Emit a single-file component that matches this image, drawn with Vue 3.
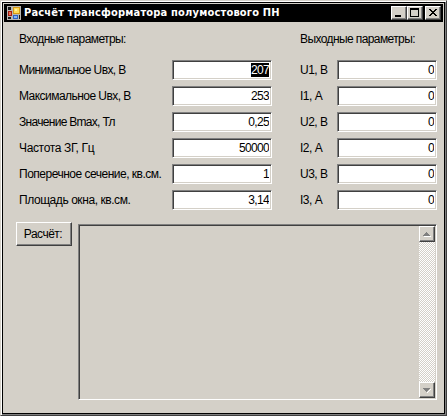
<template>
  <div class="window">
    <div class="titlebar">
      <svg class="app-icon" width="14" height="14" viewBox="0 0 14 14" shape-rendering="crispEdges">
        <rect width="14" height="14" fill="#b8b6b2" />
        <path fill="#181818" d="M1 1H4V4H1ZM1 11H4V13H1ZM12 9H13V13H12Z" />
        <rect x="1" y="5" width="4" height="5" fill="#a51d12" />
        <rect x="2" y="6" width="2" height="3" fill="#ee7050" />
        <rect x="6" y="1" width="7" height="7" fill="#d79a16" />
        <rect x="7" y="2" width="5" height="5" fill="#ffdc58" />
        <rect x="8" y="3" width="2" height="2" fill="#fff0a0" />
        <rect x="6" y="9" width="5" height="4" fill="#2f62c0" />
        <rect x="7" y="10" width="3" height="2" fill="#82b4fa" />
      </svg>
      <h1>Расчёт трансформатора полумостового ПН</h1>
      <div class="controls">
        <button class="ctl" aria-label="minimize">
          <svg width="12" height="10" shape-rendering="crispEdges"><path d="M2 7H8V9H2Z" /></svg>
        </button>
        <button class="ctl" aria-label="maximize">
          <svg width="12" height="10" shape-rendering="crispEdges">
            <path fill-rule="evenodd" d="M1 0H10V9H1ZM2 2V8H9V2Z" />
          </svg>
        </button>
        <button class="ctl close" aria-label="close">
          <svg width="12" height="10" shape-rendering="crispEdges">
            <path d="M2 1H4V2H5V3H7V2H8V1H10V2H9V3H8V4H7V5H8V6H9V7H10V8H8V7H7V6H5V7H4V8H2V7H3V6H4V5H5V4H4V3H3V2H2Z" />
          </svg>
        </button>
      </div>
    </div>

    <div class="form">
      <div class="group">
        <h2>Входные параметры:</h2>
        <label v-for="(item, i) in inputs" :key="item.label" class="row">
          <span :style="{ letterSpacing: item.spacing + 'px' }">{{ item.label }}</span>
          <input :ref="el => { if (i === 0) firstInput = el }" v-model="item.value" type="text" spellcheck="false" />
        </label>
      </div>
      <div class="group out">
        <h2>Выходные параметры:</h2>
        <label v-for="item in outputs" :key="item.label" class="row">
          <span>{{ item.label }}</span>
          <input v-model="item.value" type="text" />
        </label>
      </div>
    </div>

    <div class="bottom">
      <button class="calc">Расчёт:</button>
      <div class="log">
        <div class="log-text"></div>
        <div class="scrollbar">
          <button class="arrow" aria-label="up">
            <svg width="12" height="12" shape-rendering="crispEdges">
              <path fill="#fff" d="M3 8H10V9H3Z" />
              <path fill="#808080" d="M5 4H6V5H7V6H8V7H9V8H2V7H3V6H4V5H5Z" />
            </svg>
          </button>
          <button class="arrow" aria-label="down">
            <svg width="12" height="12" shape-rendering="crispEdges">
              <path fill="#fff" d="M9 5H10V6H9V7H8V8H7V9H6V8H7V7H8V6H9Z" />
              <path fill="#808080" d="M2 4H9V5H8V6H7V7H6V8H5V7H4V6H3V5H2Z" />
            </svg>
          </button>
        </div>
      </div>
    </div>
  </div>
</template>

<script setup>
import { onMounted, reactive } from 'vue';

const inputs = reactive([
  { label: 'Минимальное Uвх, В', value: '207', spacing: -0.58 },
  { label: 'Максимальное Uвх, В', value: '253', spacing: -0.54 },
  { label: 'Значение Bmax, Тл', value: '0,25', spacing: -0.7 },
  { label: 'Частота ЗГ, Гц', value: '50000', spacing: -0.35 },
  { label: 'Поперечное сечение, кв.см.', value: '1', spacing: -0.5 },
  { label: 'Площадь окна, кв.см.', value: '3,14', spacing: -0.43 }
]);

const outputs = reactive(
  ['U1, В', 'I1, А', 'U2, В', 'I2, А', 'U3, В', 'I3, А'].map(label => ({ label, value: '0' }))
);

let firstInput = null;

onMounted(() => {
  firstInput.focus();
  firstInput.select();
});
</script>

<style>
body {
  margin: 0;
  background: #d4d0c8;
}
</style>

<style scoped>
* {
  box-sizing: border-box;
}

.window {
  width: 447px;
  height: 416px;
  padding: 3px;
  background: #d4d0c8;
  border: 1px solid;
  border-color: #d4d0c8 #404040 #404040 #d4d0c8;
  box-shadow: inset 1px 1px #fff, inset -1px -1px #808080, inset 0 0 0 2px #000;
  font-family: "Liberation Sans", Arial, sans-serif;
  font-size: 12px;
  letter-spacing: -0.5px;
  color: #000;
}

.titlebar {
  display: flex;
  align-items: center;
  height: 18px;
  padding: 0 2px 0 3px;
  background: #000;
}

h1 {
  flex: 1;
  margin: 0 0 0 3px;
  font: bold 11px/18px "DejaVu Sans Condensed", "DejaVu Sans", sans-serif;
  letter-spacing: 0.19px;
  color: #fff;
  white-space: nowrap;
}

.controls {
  display: flex;
}

button {
  padding: 0;
  font: inherit;
  letter-spacing: inherit;
  color: #000;
  background: #d4d0c8;
  border: 1px solid;
  border-color: #fff #404040 #404040 #fff;
  box-shadow: inset -1px -1px #808080;
}

.ctl {
  width: 16px;
  height: 14px;
}

.ctl svg {
  display: block;
  margin: 1px;
}

.close {
  margin-left: 2px;
}

.form {
  display: flex;
  padding: 11px 0 0 15px;
}

.group {
  flex: none;
  width: 281px;
}

h2 {
  height: 27px;
  margin: 0;
  font-size: 12px;
  font-weight: normal;
  line-height: 13px;
  letter-spacing: -0.6px;
}

.row {
  display: flex;
  align-items: center;
  height: 20px;
  margin-bottom: 6px;
}

.row span {
  width: 153px;
  line-height: 14px;
  white-space: nowrap;
}

.out {
  width: auto;
}

.out .row span {
  width: 37px;
}

input {
  width: 100px;
  height: 20px;
  padding: 1px 2px 2px 1px;
  font: inherit;
  line-height: 13px;
  letter-spacing: -0.67px;
  text-align: right;
  color: #000;
  background: #fff;
  border: 1px solid;
  border-color: #808080 #fff #fff #808080;
  border-radius: 0;
  box-shadow: inset 1px 1px #404040, inset -1px -1px #d4d0c8;
  outline: none;
}

input::selection {
  color: #fff;
  background: #000;
}

.bottom {
  display: flex;
  align-items: flex-start;
  padding: 6px 0 0 12px;
}

.calc {
  width: 56px;
  height: 24px;
  margin-right: 6px;
  padding-right: 2px;
}

.log {
  display: flex;
  width: 359px;
  height: 176px;
  margin-top: 2px;
  padding: 1px;
  border: 1px solid;
  border-color: #808080 #fff #fff #808080;
  box-shadow: inset 1px 1px #404040, inset -1px -1px #d4d0c8;
}

.log-text {
  flex: 1;
}

.scrollbar {
  display: flex;
  flex-direction: column;
  justify-content: space-between;
  width: 16px;
  background: repeating-conic-gradient(#fff 0 25%, #d4d0c8 0 50%) 0 0 / 2px 2px;
}

.arrow {
  width: 16px;
  height: 16px;
}

.arrow svg {
  display: block;
  margin: 1px;
}
</style>
